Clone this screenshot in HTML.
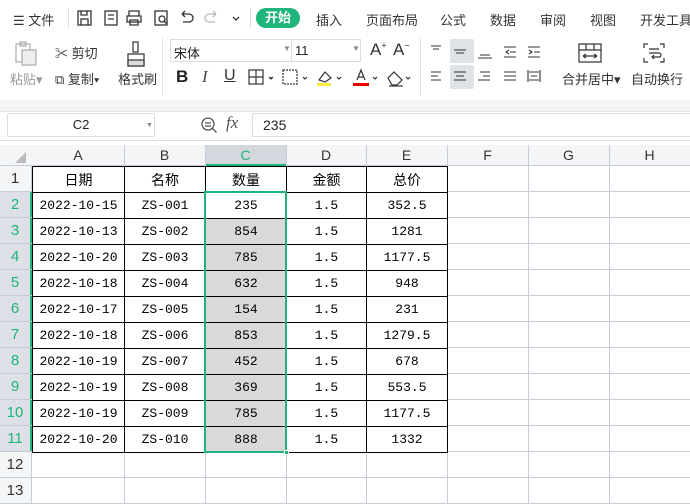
<!DOCTYPE html>
<html><head><meta charset="utf-8"><style>
*{box-sizing:border-box;margin:0;padding:0}
body{width:690px;height:504px;overflow:hidden;background:#fff;font-family:"Liberation Sans","Noto Sans CJK SC",sans-serif;position:relative;color:#333}
.a{position:absolute}
.t{font-size:13px;white-space:nowrap}
.ic{position:absolute}
.cell{position:absolute;text-align:center;font-family:"Liberation Mono","Noto Sans CJK SC",monospace;font-size:13px;color:#000;line-height:26px}
.hd{position:absolute;text-align:center;font-size:14px;color:#333}
</style></head><body>
<div class="a" style="left:0;top:0;width:690px;height:36px;background:#fff"></div>
<div class="a t" style="left:13px;top:10px;font-size:13px">☰ 文件</div>
<div class="a" style="left:68px;top:8px;width:1px;height:20px;background:#ddd"></div>
<svg class="a" style="left:76px;top:8px" width="170" height="20" fill="none" stroke="#333" stroke-width="1.3">
<rect x="2" y="3" width="13" height="14"/><path d="M5 3v4h6V3M5 17v-6h7v6"/>
<rect x="29" y="3" width="12" height="14"/><path d="M32 7h6M32 11h6"/>
<path d="M53 8V3h10v5M51 8h14v6H51zM54 12h8v5h-8z"/>
<rect x="79" y="3" width="12" height="14"/><circle cx="86" cy="11" r="3"/><path d="M88 13l3 3"/>
<path d="M106 6h7a4 4 0 010 8h-6M106 6l3-3M106 6l3 3"/>
<path d="M140 6h-7a4 4 0 000 8h6M140 6l-3-3M140 6l-3 3" stroke="#bbb"/>
<path d="M157 9l3 3 3-3"/>
</svg>
<div class="a" style="left:250px;top:8px;width:1px;height:20px;background:#ddd"></div>
<div class="a" style="left:256px;top:8px;width:44px;height:20px;background:#1fb47a;border-radius:10px;color:#fff;font-size:13px;text-align:center;line-height:20px;font-weight:bold">开始</div>
<div class="a t" style="left:316px;top:10px;color:#333">插入</div>
<div class="a t" style="left:366px;top:10px">页面布局</div>
<div class="a t" style="left:440px;top:10px">公式</div>
<div class="a t" style="left:490px;top:10px">数据</div>
<div class="a t" style="left:540px;top:10px">审阅</div>
<div class="a t" style="left:590px;top:10px">视图</div>
<div class="a t" style="left:640px;top:10px">开发工具</div>
<svg class="a" style="left:14px;top:41px" width="24" height="26" fill="none" stroke="#aaa" stroke-width="1.2"><rect x="2" y="3" width="14" height="18"/><rect x="8" y="9" width="14" height="15" fill="#eee"/><rect x="6" y="1" width="6" height="4"/></svg>
<div class="a t" style="left:10px;top:69px;color:#999">粘贴▾</div>
<div class="a t" style="left:55px;top:43px">✂ 剪切</div>
<div class="a t" style="left:55px;top:69px">⧉ 复制▾</div>
<svg class="a" style="left:125px;top:40px" width="22" height="28" fill="none" stroke="#333" stroke-width="1.2"><rect x="8" y="2" width="5" height="10"/><path d="M3 14h16v12H3z"/><rect x="3" y="20" width="16" height="6" fill="#ddd"/></svg>
<div class="a t" style="left:118px;top:69px">格式刷</div>
<div class="a" style="left:162px;top:38px;width:1px;height:58px;background:#e5e5e5"></div>
<div class="a" style="left:170px;top:39px;width:191px;height:23px;border:1px solid #ddd"></div>
<div class="a" style="left:291px;top:40px;width:1px;height:21px;background:#ddd"></div>
<div class="a t" style="left:174px;top:43px;font-size:13px;color:#222">宋体</div>
<div class="a" style="left:283px;top:44px;font-size:8px;color:#888">▼</div>
<div class="a t" style="left:295px;top:43px;color:#222">11</div>
<div class="a" style="left:352px;top:44px;font-size:8px;color:#888">▼</div>
<div class="a t" style="left:370px;top:40px;font-size:17px">A<sup style="font-size:9px">+</sup></div>
<div class="a t" style="left:393px;top:40px;font-size:17px">A<sup style="font-size:9px">−</sup></div>
<div class="a" style="left:176px;top:67px;font-size:17px;font-weight:bold;color:#222">B</div>
<div class="a" style="left:202px;top:67px;font-size:17px;font-style:italic;color:#444;font-family:'Liberation Serif',serif">I</div>
<div class="a" style="left:224px;top:67px;font-size:16px;text-decoration:underline;color:#333">U</div>
<svg class="a" style="left:247px;top:68px" width="140" height="20" fill="none" stroke="#333" stroke-width="1.2">
<rect x="2" y="2" width="14" height="14"/><path d="M9 2v14M2 9h14"/><path d="M22 9l2 2 2-2" fill="#666"/>
<rect x="36" y="2" width="14" height="14" stroke-dasharray="2 1"/><path d="M56 9l2 2 2-2"/>
<path d="M72 12l6-8 6 6-6 4z"/><rect x="70" y="15" width="14" height="3" fill="#ffeb3b" stroke="none"/><path d="M90 9l2 2 2-2"/>
<path d="M110 12l4-10 4 10M111.5 9h5"/><rect x="106" y="15" width="16" height="3" fill="#e00" stroke="none"/><path d="M126 9l2 2 2-2"/>
</svg>
<svg class="a" style="left:385px;top:68px" width="30" height="20" fill="none" stroke="#333" stroke-width="1.2"><path d="M3 10l6-6 8 8-5 5H7z"/><path d="M4 18h14"/><path d="M21 9l2 2 2-2"/></svg>
<div class="a" style="left:420px;top:38px;width:1px;height:58px;background:#e5e5e5"></div>
<div class="a" style="left:450px;top:39px;width:24px;height:24px;background:#dfe2e6;border-radius:2px"></div>
<div class="a" style="left:450px;top:65px;width:24px;height:24px;background:#dfe2e6;border-radius:2px"></div>
<svg class="a" style="left:428px;top:42px" width="120" height="46" fill="none" stroke="#333" stroke-width="1.1">
<path d="M3 4h10M5 7h6"/><path d="M26 8h12M28 11h8"/><path d="M52 13h10M50 16h14"/><path d="M76 5h12M82 10h6M76 15h12M81 8l-3 2 3 2"/><path d="M100 5h12M106 10h6M100 15h12M101 8l3 2-3 2"/>
<path d="M3 30h10M3 34h7M3 38h10"/><path d="M26 30h12M28 34h8M26 38h12"/><path d="M52 30h10M55 34h7M50 38h12"/><path d="M76 30h12M76 34h12M76 38h12"/><path d="M100 28v12M112 28v12M101 30h10M101 38h10M103 34h6"/>
</svg>
<svg class="a" style="left:577px;top:42px" width="26" height="22" fill="none" stroke="#333" stroke-width="1.2"><rect x="2" y="2" width="22" height="18"/><path d="M2 8h22M9 2v6M17 2v6M6 14h14M6 14l3-2M6 14l3 2M20 14l-3-2M20 14l-3 2"/></svg>
<div class="a t" style="left:562px;top:69px">合并居中▾</div>
<svg class="a" style="left:642px;top:42px" width="24" height="22" fill="none" stroke="#333" stroke-width="1.2"><path d="M2 6V2h4M18 2h4v4M2 16v4h4M18 20h4v-4M7 7h10M7 11h10a2 2 0 010 4h-6M12 13l-2 2 2 2"/></svg>
<div class="a t" style="left:631px;top:69px">自动换行</div>
<div class="a" style="left:0;top:100px;width:690px;height:12px;background:#f4f4f4;border-bottom:1px solid #e3e3e3"></div>
<div class="a" style="left:0;top:113px;width:690px;height:28px;background:#fff"></div>
<div class="a" style="left:7px;top:113px;width:148px;height:24px;border:1px solid #ddd;border-radius:2px;text-align:center;font-size:13px;line-height:22px;color:#222">C2</div>
<div class="a" style="left:146px;top:122px;font-size:7px;color:#888">▼</div>
<svg class="a" style="left:200px;top:116px" width="18" height="18" fill="none" stroke="#555" stroke-width="1.3"><circle cx="8" cy="8" r="6"/><path d="M12.5 12.5l4 4M5 7h6M5 10h6"/></svg>
<div class="a" style="left:226px;top:113px;font-size:17px;font-style:italic;font-family:'Liberation Serif',serif;color:#555">fx</div>
<div class="a" style="left:252px;top:113px;width:440px;height:24px;border:1px solid #ddd;border-radius:2px;font-size:14px;line-height:22px;padding-left:10px;color:#222">235</div>
<div class="a" style="left:0;top:140px;width:690px;height:1px;background:#dde"></div>
<div class="a" style="left:0;top:145px;width:690px;height:21px;background:#f4f5f7;border-bottom:1px solid #c8ccd6"></div>
<div class="a" style="left:0;top:166px;width:32px;height:338px;background:#f4f5f7;border-right:1px solid #c8ccd6"></div>
<div class="a" style="left:0;top:192px;width:31px;height:260px;background:#dde0e6"></div>
<div class="a" style="left:30px;top:192px;width:2px;height:260px;background:#1fb47a"></div>
<div class="a" style="left:205px;top:145px;width:81px;height:21px;background:#d4d7dd;border-bottom:2px solid #1fb47a"></div>
<svg class="a" style="left:14px;top:150px" width="14" height="14"><path d="M12 2v11H1z" fill="#bbb"/></svg>
<div id="g"></div>
<script>
var xs=[32,124,205,286,366,447,528,609,690],L="ABCDEFGH",h="";
for(var i=0;i<8;i++){h+='<div class="hd" style="left:'+xs[i]+'px;top:147px;width:'+(xs[i+1]-xs[i])+'px;'+(i==2?'color:#1fb47a':'')+'">'+L[i]+'</div>';
h+='<div class="a" style="left:'+xs[i+1]+'px;top:145px;width:1px;height:359px;background:#c8ccd6"></div>';}
for(var r=1;r<=13;r++){var y=166+26*(r-1);h+='<div class="a" style="left:0;top:'+(y+25)+'px;width:690px;height:1px;background:#c8ccd6"></div>';
h+='<div class="hd" style="left:0;top:'+(y+4)+'px;width:30px;font-size:15px;'+(r>=2&&r<=11?'color:#1fb47a':'')+'">'+r+'</div>';}
var d=[["日期","名称","数量","金额","总价"],["2022-10-15","ZS-001","235","1.5","352.5"],["2022-10-13","ZS-002","854","1.5","1281"],["2022-10-20","ZS-003","785","1.5","1177.5"],["2022-10-18","ZS-004","632","1.5","948"],["2022-10-17","ZS-005","154","1.5","231"],["2022-10-18","ZS-006","853","1.5","1279.5"],["2022-10-19","ZS-007","452","1.5","678"],["2022-10-19","ZS-008","369","1.5","553.5"],["2022-10-19","ZS-009","785","1.5","1177.5"],["2022-10-20","ZS-010","888","1.5","1332"]];
for(var r=0;r<11;r++)for(var c=0;c<5;c++){var y=166+26*r;var bg=(c==2&&r>=2)?'#d9d9d9':'#fff';
h+='<div class="cell" style="left:'+xs[c]+'px;top:'+y+'px;width:'+(xs[c+1]-xs[c]+1)+'px;height:27px;border:1px solid #000;background:'+bg+';'+(r==0?'font-family:\'Noto Sans CJK SC\',sans-serif;font-size:14px;':'')+'">'+d[r][c]+'</div>';}
h+='<div class="a" style="left:204px;top:191px;width:83px;height:262px;border:2px solid #1fb47a"></div>';
h+='<div class="a" style="left:284px;top:450px;width:5px;height:5px;background:#1fb47a;border:1px solid #fff"></div>';
document.getElementById("g").innerHTML=h;
</script>
</body></html>
